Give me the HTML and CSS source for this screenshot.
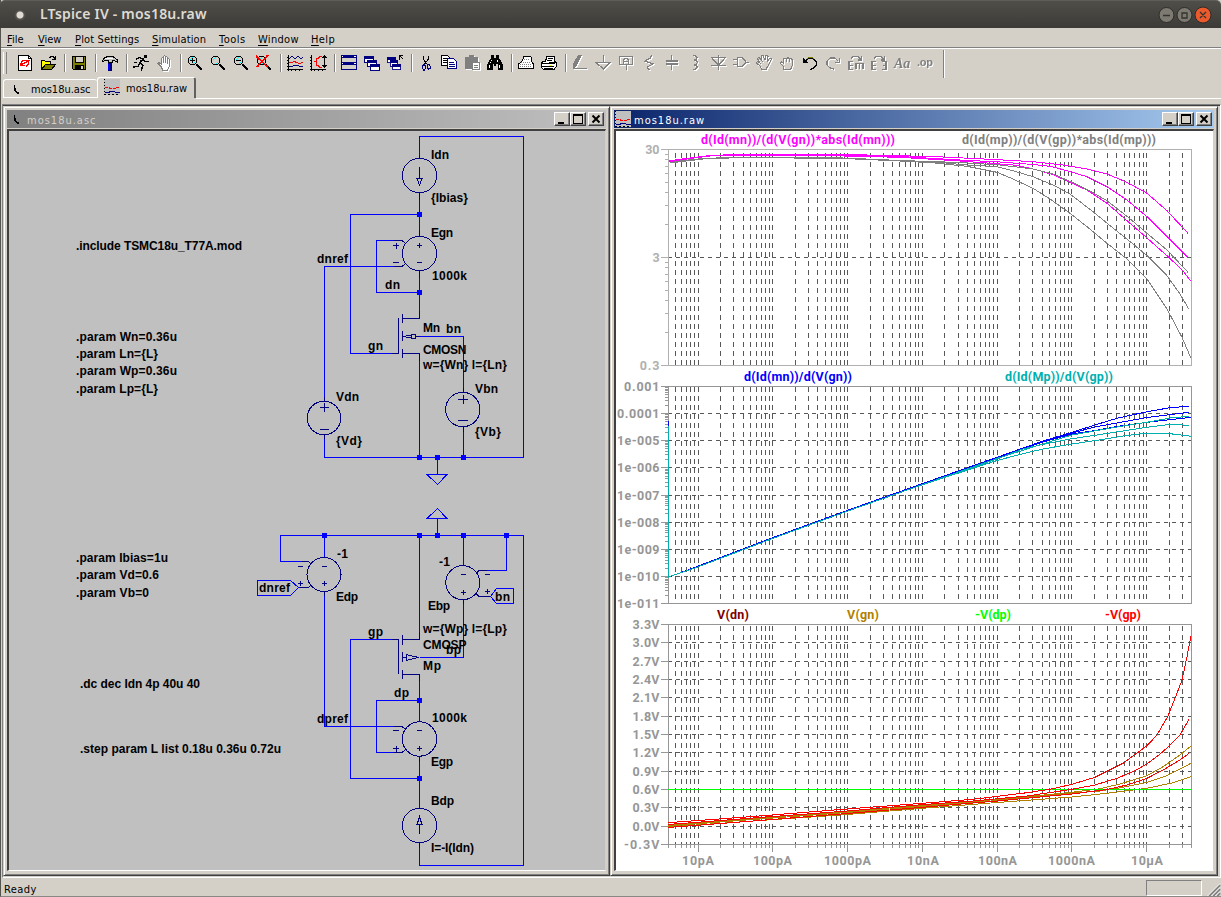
FILE: index.html
```html
<!DOCTYPE html>
<html lang="en">
<head>
<meta charset="utf-8">
<title>LTspice IV - mos18u.raw</title>
<link rel="stylesheet" href="styles.css">
</head>
<body>
<svg class="defs" width="0" height="0">
  <defs>
    <symbol id="i-glass" viewBox="0 0 16 16"><path d="M3.500 1.500h4l2 2v4l-2 2h-4l-2-2v-4z" stroke="#000" fill="none"/><path d="M3 4.500h1M4 3.500h1M5 2.500h1M7 7.500h1M6 8.500h1" stroke="#0ff"/><path d="M9.500 9.500L15 15" stroke="#000" stroke-width="2"/></symbol>
    <symbol id="i-wave" viewBox="0 0 16 16"><path d="M1.500 0v16M0 14.500h16M0 2.500h1M0 5.500h1M0 8.500h1M0 11.500h1M4.500 14v2M8.500 14v2M12.500 14v2" stroke="#000"/><path d="M2 4l3-3 3 3 3-3 3 3 2-2M2 11.500h3l2-1h4l2 1h3" stroke="#000080" fill="none"/><path d="M2 7.500h3l2-1 3 1 2 1 4-1" stroke="#f00" fill="none"/></symbol>
    <symbol id="i-raw" viewBox="0 0 16 16"><path d="M0 0h16v16H0z" fill="#c0c0c0"/><path d="M.5 0v16" stroke="#000" stroke-dasharray="1 2"/><path d="M0 15.500h16" stroke="#000" stroke-dasharray="2 2"/><path d="M1 8.500h4l1 1h5l1-1h4" stroke="#f00" stroke-dasharray="3 1" fill="none"/><path d="M1 13.500h4l1-1h4l2 1h4" stroke="#000080" fill="none"/></symbol>
    <symbol id="i-asc" viewBox="0 0 16 16"><path d="M6.500 4v6M7.500 7v4M8.500 10v2M9.500 11v2M10.500 11v2" stroke="#000"/></symbol>
    <symbol id="i-casc" viewBox="0 0 16 16"><g fill="#fff" stroke="#000080"><path d="M.5 1.500h9v6h-9zM3.500 5.500h9v6h-9zM6.500 9.500h9v6h-9z"/></g><path d="M0 1h10v3H0zM3 5h10v3H3zM6 9h10v3H6z" fill="#000080"/></symbol>
  </defs>
</svg>

<div class="app">
  <header class="titlebar">
    <span class="orb"></span>
    <h1>LTspice IV - mos18u.raw</h1>
    <div class="wm">
      <svg viewBox="0 0 56 20" width="56" height="20"><g stroke="#2d2c29"><circle cx="9.500" cy="10" r="7.500" fill="#7d7a72"/><circle cx="27.500" cy="10" r="7.500" fill="#7d7a72"/><circle cx="46" cy="10" r="8" fill="#ea5a2c"/></g><path d="M6 10.500h7M25 8h5v5h-5zM43 7l6 6M49 7l-6 6" stroke="#35332f" stroke-width="1.300" fill="none"/></svg>
    </div>
  </header>

  <nav class="menubar">
    <span class="m-file"><u>F</u>ile</span><span class="m-view"><u>V</u>iew</span><span class="m-plot"><u>P</u>lot Settings</span><span class="m-sim"><u>S</u>imulation</span><span class="m-tools"><u>T</u>ools</span><span class="m-win"><u>W</u>indow</span><span class="m-help"><u>H</u>elp</span>
  </nav>

  <div class="toolbar">
    <i class="grab"></i>
    <svg class="ic" viewBox="0 0 16 16"><path d="M1.500.5h10l3 3v12h-13z" fill="#fff" stroke="#000"/><path d="M11.500.5v3h3" fill="none" stroke="#000"/><path d="M3.500 11l1-4 2-1.500h2M7 5.500h5l-1 4-2 2M4 10.500h4M4 10l8-4.500" fill="none" stroke="#f00" stroke-width="1.400"/></svg>
    <svg class="ic" viewBox="0 0 16 16"><path d="M1.500 14V5.500h3l1 1h5v3" fill="#ff0" stroke="#000"/><path d="M1.500 14.500l4-5h10l-4 5z" fill="#808000" stroke="#000"/><path d="M9 2.500h1l1-1h2l1 1 1 1.500M15.500 1v4M12 4.500h3" stroke="#000" fill="none"/></svg>
    <i class="sep"></i>
    <svg class="ic" viewBox="0 0 16 16"><path d="M1.500 1.500h13v13h-12l-1-1z" fill="#808000" stroke="#000"/><path d="M4.500 1.500h8v6h-8z" fill="#d4d0c8" stroke="#000"/><path d="M4 10h9v5H4z" fill="#000"/><path d="M10 11h2v3h-2z" fill="#d4d0c8"/></svg>
    <i class="sep"></i>
    <svg class="ic" viewBox="0 0 16 16"><path d="M.5 5.500L3 2.500l3-1h5l2 1.500 2.500 2v2L12 5.500h-2v2H6v-2H3L1 7z" fill="#c0c0c0" stroke="#000"/><path d="M3 3.500h8" stroke="#fff"/><path d="M6 8h4v8H6z" fill="#000080"/><path d="M7 9v6" stroke="#00f" stroke-width="2"/></svg>
    <i class="sep"></i>
    <svg class="ic" viewBox="0 0 16 16"><path d="M11 0h3v3h-3z"/><path d="M3 4.500l3-2 4 1.500-3 4 3 2.500-2 5M10 4l2 2.500h4M7 8.500l-2 3-5 .5" fill="none" stroke="#000" stroke-width="1.400"/><path d="M4 7.500H1M8 5L6 8.500" stroke="#000"/></svg>
    <svg class="ic dis" viewBox="0 0 16 16"><path d="M5.500 12L2 8.500l1-1 2.500 2V3.500l1-1 1 1V8 1.500l1-1 1 1V8 2.500l1-1 1 1V9 4.500l1-1 1 1V11l-2 4h-5z" fill="#fff" stroke="#808080"/></svg>
    <i class="sep"></i>
    <svg class="ic" viewBox="0 0 16 16"><use href="#i-glass"/><path d="M3 5.500h5M5.500 3v5" stroke="#000"/></svg>
    <svg class="ic" viewBox="0 0 16 16"><use href="#i-glass"/></svg>
    <svg class="ic" viewBox="0 0 16 16"><use href="#i-glass"/><path d="M3 5.500h5" stroke="#000"/></svg>
    <svg class="ic" viewBox="0 0 16 16"><use href="#i-glass"/><path d="M0 1l12 11M12 0L1 12M0 2l3 2" stroke="#f00" stroke-width="1.600"/></svg>
    <i class="sep"></i>
    <svg class="ic" viewBox="0 0 16 16"><use href="#i-wave"/></svg>
    <svg class="ic" viewBox="0 0 16 16"><path d="M1.500 0v16M0 14.500h16M0 2.500h1M0 5.500h1M0 8.500h1M0 11.500h1M4.500 14v2M8.500 14v2M12.500 14v2M14.500 1v11M12.500 3l2-2 2 2M12.500 10l2 2 2-2" stroke="#000" fill="none"/><path d="M12 1.500h-2l-2 2H6v7h2l2 2h2M4 6.500h2" stroke="#f00" fill="none"/></svg>
    <i class="sep"></i>
    <svg class="ic" viewBox="0 0 16 16"><path d="M.5.500h15v14H.5zM.5 7.500h15" fill="#d4d0c8" stroke="#000080"/><path d="M0 0h16v3H0zM0 7h16v3H0z" fill="#000080"/><path d="M1 1.500h1M13 1.500h2M1 8.500h1M13 8.500h2" stroke="#fff"/></svg>
    <svg class="ic" viewBox="0 0 16 16"><use href="#i-casc"/></svg>
    <svg class="ic" viewBox="0 0 16 16"><use href="#i-casc" width="14" height="16"/><path d="M12.500 5V.5H16M12.500.5l4 4" stroke="#000" fill="none"/></svg>
    <i class="sep"></i>
    <svg class="ic" viewBox="0 0 16 16"><path d="M5.500 1v3l3 5M10.500 1v3l-4 5" stroke="#000" fill="none"/><path d="M5.500 9.500l2 1v3l-1 1.500h-1l-1-1.500v-2zM9.500 9.500l2 .5 1 2v1.500l-2 .5-1-1z" stroke="#000080" fill="none"/></svg>
    <svg class="ic" viewBox="0 0 16 16"><path d="M.5.500h6l2 2v8h-8z" fill="#fff" stroke="#000"/><path d="M2 3.500h4M2 5.500h4M2 7.500h4" stroke="#000"/><path d="M6.500 3.500h6l3 3v7h-9z" fill="#fff" stroke="#000080"/><path d="M8 7.500h5M8 9.500h6M8 11.500h6" stroke="#000080"/></svg>
    <svg class="ic dis" viewBox="0 0 16 16"><path d="M1 2h4V0h5v2h4v5H8v7H1z" fill="#808080"/><path d="M8.500 7.500h7v7h-7z" fill="#fff" stroke="#808080"/><path d="M10 10.500h4M10 12.500h4" stroke="#808080"/></svg>
    <svg class="ic" viewBox="0 0 16 16"><path d="M4 0h3v3h2V0h3v3l2 3 2 4v5h-5V9H9v2H7V9H6v6H0v-5l2-4 2-3z"/><path d="M4 5.500h1M3 7.500h1M2.500 10v3M10.500 5v2M12.500 10v3" stroke="#fff"/></svg>
    <i class="sep"></i>
    <svg class="ic" viewBox="0 0 16 16"><path d="M3.500 7L6 1.500h6l1.500 1L13 6l2.500 3v4.500h-15V9z" fill="#fff" stroke="#000"/><path d="M6 4.500h6M3 7.500h10M2 9.500h12M2 11.500h12" stroke="#808080" stroke-dasharray="1 1"/></svg>
    <svg class="ic" viewBox="0 0 16 16"><path d="M4.500 6L6 1.500h8l-1 4.500 2 1v5l-2 2.500H2.500l-2-2V8l2-2z" fill="#fff" stroke="#000"/><path d="M7 3.500h5M6 5.500h5M1 8.500h12l2-2M1 11.500h12M3 13.500h9" stroke="#000"/><path d="M8 10.500h3" stroke="#ff0"/></svg>
    <i class="sep"></i>
    <svg class="ic dis" viewBox="0 0 16 16"><path d="M6 0h4L5 10l-3 3H1V9z" fill="#808080"/><path d="M1 13.500h14" stroke="#808080"/></svg>
    <svg class="ic dis" viewBox="0 0 16 16"><path d="M8.500 0v7M1 7.500h14.500L8.500 14z" stroke="#808080" fill="none" stroke-width="1.300"/></svg>
    <svg class="ic dis" viewBox="0 0 16 16"><path d="M1.500 1.500h13v8h-13zM8.500 10v5M5.500 8.500V5l1-1.500h3l1 1.500v3.500M6 6.500h4" stroke="#808080" fill="none" stroke-width="1.200"/></svg>
    <svg class="ic dis" viewBox="0 0 16 16"><path d="M10.500 0l-1 3L4 6l8 3-6 3 2.500 3" stroke="#808080" fill="none" stroke-width="1.300"/></svg>
    <svg class="ic dis" viewBox="0 0 16 16"><path d="M7.500 0v5M7.500 9v6" stroke="#808080"/><path d="M2 6h12M2 9h12" stroke="#808080" stroke-width="2"/></svg>
    <svg class="ic dis" viewBox="0 0 16 16"><path d="M6 .5h2l2 2-1 2.500H7h2l1.500 2-1.500 3H7h2l1.500 2L8 14.500H6" stroke="#808080" fill="none" stroke-width="1.300"/></svg>
    <svg class="ic dis" viewBox="0 0 16 16"><path d="M8.500 0v15M1 2.500h15M2 3l6.500 7L15 3M1 10.500h15" stroke="#808080" fill="none" stroke-width="1.300"/></svg>
    <svg class="ic dis" viewBox="0 0 16 16"><path d="M4.500 2.500h4l4 3v3l-4 3h-4zM0 4.500h4M0 9.500h4M13 7.500h3" stroke="#808080" fill="none" stroke-width="1.500"/></svg>
    <svg class="ic dis" viewBox="0 0 16 16"><path d="M6 14.500L4 11 .5 8l1-1.500L4 8 1.500 3.500 3 2.500 6 6 5 1l2-.5L9 5l1-4.500 2 .5-.5 5L14 3l1.500 1-3 6-2.500 4.500z" stroke="#808080" fill="none" stroke-width="1.100"/></svg>
    <svg class="ic dis" viewBox="0 0 16 16"><path d="M5 14.500L4 11 1.500 8.500 2.500 7l2 1V4L6 3l1.500 1L9 2.500 10.500 4 12 3.500 13.500 5v5l-2 4.500zM7.500 4v3M10.500 4v3" stroke="#808080" fill="none" stroke-width="1.100"/></svg>
    <svg class="ic" viewBox="0 0 16 16"><path d="M3 6.500l3-3h5l3 3v4l-3 3-3 1" fill="none" stroke="#000"/><path d="M5 3.500l2-1h3l2 1" fill="none" stroke="#808000"/><path d="M1 3v5h5z"/></svg>
    <svg class="ic dis" viewBox="0 0 16 16"><path d="M13 6l-3-3H5L2 6v4l3 3 4 1M14.500 3v4.500H10" fill="none" stroke="#808080" stroke-width="1.300"/></svg>
    <svg class="ic dis" viewBox="0 0 16 16"><path d="M5 6.500H1v8h4M1 10.500h4M8 14V8.500h7V14M11.500 9v5M3 3.500l2-2h5l3 3M13.500 1v4H10" fill="none" stroke="#808080" stroke-width="1.300"/></svg>
    <svg class="ic dis" viewBox="0 0 16 16"><path d="M5 6.500H1v8h4M1 10.500h4M11 6.500h4v8h-4M12 10.500h3M3 3.500l2-2h5l3 3M13.500 1v4H10" fill="none" stroke="#808080" stroke-width="1.300"/></svg>
    <span class="ic dis aa">Aa</span>
    <span class="ic dis op">.op</span>
    <i class="endbar"></i>
  </div>

  <div class="tabs">
    <div class="tab"><svg class="ti" viewBox="0 0 16 16"><use href="#i-asc"/></svg><span>mos18u.asc</span></div>
    <div class="tab on"><svg class="ti" viewBox="0 0 16 16"><use href="#i-raw"/></svg><span>mos18u.raw</span></div>
    <div class="rest"></div>
  </div>

  <main class="mdi">
    <section class="win">
      <div class="cap off"><svg class="ti" viewBox="0 0 16 16"><use href="#i-asc"/></svg><span>mos18u.asc</span>
        <div class="btns"><svg viewBox="0 0 14 12"><path d="M3 9h6v2H3z"/></svg><svg viewBox="0 0 14 12"><path d="M2 1h10v10H2zM3 3v7h8V3z" fill-rule="evenodd"/></svg><svg class="x" viewBox="0 0 14 12"><path d="M3.500 2.500l7 7M10.500 2.500l-7 7" stroke="#000" stroke-width="2"/></svg></div></div>
      <div class="view gray">
        <svg class="sheet" viewBox="9 131 595 739" width="595" height="739">
          <g class="wire">
            <path d="M419.500 158V136.500H523.500V457.500H324.500V434M419.500 193V236M419.500 214.500H350.500V353.500H392M402 240.500H376.500V292.500H419.500M419.500 271V312M402 266.500H324.500V401M420 336.500H463.500V392M463.500 427V457M419.500 360V457M437.500 457V474.500M427 474.500H447L437.500 484.500Z"/>
            <path d="M437.500 535V518.500M427 518.500H447L437.500 508.500ZM302 561.500H280.500V535.500H523.500V865.500H419.500V843M324.500 535V557M419.500 535V633M463.500 535V566M506.500 535V570.500H487M463.500 600V657.500H420M324.500 592V726.500H402M392 639.500H350.500V778.500H419.500M402 752.500H376.500V700.500H419.500M419.500 680V722M419.500 757V808M257.500 580.500H290.500L298.500 587.500L290.500 595.500H257.500ZM513.500 588.500H496.500L490.500 596.500L496.500 603.500H513.500Z"/>
          </g>
          <g class="sym">
            <circle cx="419.500" cy="175.500" r="17.200"/><circle cx="419.500" cy="253.500" r="17.200"/><circle cx="324" cy="418" r="16.800"/><circle cx="462.800" cy="409.500" r="17.200"/><circle cx="324" cy="574.500" r="17"/><circle cx="462.800" cy="582.700" r="17"/><circle cx="419.500" cy="739" r="17.200"/><circle cx="419.500" cy="825.500" r="17.200"/>
            <path d="M419.500 167V178M417 178.500H422L419.500 185ZM419.500 834V824M417 824.500H422L419.500 817Z"/>
            <path d="M393 240.500H402L406 243.500M393 266.500H402L406 263.500M393 726.500H402L406 729.500M393 752.500H402L406 749.500M302 561.500H308L311 563.500M299 587.500H308L311 585.500M487 570.500H479L476 573.500M490 596.500H479L476 593.500"/>
            <path d="M419.500 155V158M419.500 193V200M419.500 230V236M419.500 271V278M324.500 397V401M324.500 434V439M463.500 388V392M463.500 427V432M324.500 592V596M463.500 600V604M419.500 757V762M419.500 843V848"/>
            <path d="M393 245.500H399M396 242.500V249M393 262.500H399M417 245.500H422M419.500 243V248M417 262.500H422M393 730.500H399M393 748.500H399M396 745.500V752M417 730.500H422M417 748.500H422M419.500 746V751M320 407.500H329M324.500 403V412M320 429.500H329M458 399.500H468M463.500 395V404M458 420.500H468M298 566.500H303M298 583.500H303M300.500 581V586M322 566.500H327M322 583.500H327M324.500 581V586M461 574.500H466M461 592.500H466M463.500 590V595M485 574.500H490M485 591.500H490M487.500 589V594"/>
            <path d="M392 353.500H398.500V318M402.500 314V323M402.500 331V341M402.500 349V358M402 318.500H419.500V311M402 353.500H419.500V361M402 336.500H406M406 335.500H411M406 337.500H411M411 334.500H415V338.500H411M411.500 334V339M415 336.500H420"/>
            <path d="M392 639.500H398.500V674M402.500 635V645M402.500 652V662M402.500 670V679M402 639.500H419.500V632M402 674.500H419.500V681M402 657.500H406M406.500 655V660M406 654.500L418.500 657.500L406 660.500"/>
          </g>
          <g class="node">
            <path d="M417 212h5v5h-5zM417 290h5v5h-5zM417 455h5v5h-5zM435 455h5v5h-5zM461 455h5v5h-5zM322 533h5v5h-5zM417 533h5v5h-5zM435 533h5v5h-5zM461 533h5v5h-5zM504 533h5v5h-5zM417 698h5v5h-5zM417 776h5v5h-5z"/>
          </g>
          <g class="lbl">
            <text x="431" y="159" textLength="18">Idn</text><text x="431" y="202" textLength="37">{Ibias}</text><text x="431" y="237" textLength="22">Egn</text><text x="432" y="280" textLength="35">1000k</text><text x="317" y="263" textLength="31">dnref</text><text x="385" y="289" textLength="15">dn</text><text x="368" y="350" textLength="15">gn</text><text x="423" y="332" textLength="17">Mn</text><text x="446" y="333" textLength="15">bn</text><text x="423" y="354" textLength="43.500">CMOSN</text><text x="423" y="369" textLength="84">w={Wn} l={Ln}</text><text x="336" y="401" textLength="23">Vdn</text><text x="336" y="445" textLength="26">{Vd}</text><text x="475" y="393" textLength="23">Vbn</text><text x="475" y="436" textLength="26">{Vb}</text>
            <text x="337" y="558" textLength="11">-1</text><text x="336" y="601" textLength="22">Edp</text><text x="259" y="592" textLength="31">dnref</text><text x="439" y="566" textLength="11">-1</text><text x="428" y="610" textLength="22">Ebp</text><text x="495" y="601" textLength="15">bn</text><text x="423" y="633" textLength="84">w={Wp} l={Lp}</text><text x="423" y="649" textLength="43.500">CMOSP</text><text x="446" y="654" textLength="15">bp</text><text x="423" y="670" textLength="18">Mp</text><text x="368" y="636" textLength="15">gp</text><text x="394" y="697" textLength="15">dp</text><text x="317" y="723" textLength="31">dpref</text><text x="432" y="722" textLength="35">1000k</text><text x="431" y="766" textLength="22">Egp</text><text x="431" y="805" textLength="23">Bdp</text><text x="431" y="852" textLength="43">I=-I(Idn)</text>
            <text x="76" y="250" textLength="166">.include TSMC18u_T77A.mod</text><text x="76" y="341" textLength="101">.param Wn=0.36u</text><text x="76" y="358" textLength="82">.param Ln={L}</text><text x="76" y="375" textLength="101">.param Wp=0.36u</text><text x="76" y="393" textLength="82">.param Lp={L}</text><text x="76" y="562" textLength="92">.param Ibias=1u</text><text x="76" y="579" textLength="83">.param Vd=0.6</text><text x="76" y="597" textLength="73">.param Vb=0</text><text x="80" y="688" textLength="120">.dc dec Idn 4p 40u 40</text><text x="80" y="753" textLength="201">.step param L list 0.18u 0.36u 0.72u</text>
          </g>
        </svg>
      </div>
    </section>
    <section class="win">
      <div class="cap act"><svg class="ti" viewBox="0 0 16 16"><use href="#i-raw"/></svg><span>mos18u.raw</span>
        <div class="btns"><svg viewBox="0 0 14 12"><path d="M3 9h6v2H3z"/></svg><svg viewBox="0 0 14 12"><path d="M2 1h10v10H2zM3 3v7h8V3z" fill-rule="evenodd"/></svg><svg class="x" viewBox="0 0 14 12"><path d="M3.500 2.500l7 7M10.500 2.500l-7 7" stroke="#000" stroke-width="2"/></svg></div></div>
      <div class="view"><svg class="sheet" id="plots" viewBox="616 131 596 739" width="596" height="739"></svg></div>
    </section>
  </main>

  <footer class="status"><span>Ready</span><div class="pane"></div><svg width="16" height="16" viewBox="0 0 16 16"><path d="M4 15L15 4M8 15l7-7M12 15l3-3" stroke="#808080" stroke-width="2"/><path d="M2.500 15L15 2.500M6.500 15L15 6.500M10.500 15l4.500-4.500" stroke="#fff"/></svg></footer>
</div>
<script src="plots.js"></script>
</body>
</html>
```
FILE: plots.js
```js
// Waveform panes: axes, dashed grids, traces and labels.
const NS = 'http://www.w3.org/2000/svg';
const root = document.getElementById('plots');
const X0 = 668, X1 = 1191, DEC = (X1 - X0) / 7;
const xOf = pA => X0 + Math.log10(pA / 4) * DEC;

function add(tag, attrs, text) {
  const el = document.createElementNS(NS, tag);
  for (const k in attrs) el.setAttribute(k, attrs[k]);
  if (text !== undefined) el.textContent = text;
  root.appendChild(el);
  return el;
}
const px = v => Math.round(v) + 0.5;

function verticals(top, bottom, offset) {
  let d = '';
  for (let e = 0; e < 8; e++)
    for (let k = 1; k < 10; k++) {
      const v = k * 10 ** e;
      if (v > 4.5 && v < 3.9e7) d += `M${px(xOf(v))} ${top + offset}V${bottom}`;
    }
  add('path', { class: 'grid v', d });
}
function pane(top, bottom, cls, rows, minors, offset) {
  verticals(top, bottom, offset);
  let grid = '', ticks = '';
  rows.forEach(([label, y], i) => {
    if (i > 0 && i < rows.length - 1) grid += `M${X0} ${y + 0.5}H${X1}`;
    ticks += `M661 ${y + 0.5}H${X0}`;
    const w = label.length * 7.1 - (label.length === 4 || label.length === 3 ? 1.5 : 0);
    add('text', { class: 'num ' + cls, x: 659.5 - w, y: y + 5, textLength: w }, label);
  });
  minors.forEach(y => { ticks += `M665 ${px(y)}H${X0}`; });
  add('path', { class: 'grid h', d: grid });
  add('path', { class: 'axis ' + cls, d: ticks + `M${X0 + 0.5} ${top + 0.5}H${X1 + 0.5}V${bottom + 0.5}H${X0 + 0.5}Z` });
}
function trace(color, ...lines) {
  lines.forEach(p => add('polyline', { class: 'trace', stroke: color, points: p }));
}
function title(x, w, y, color, text) {
  add('text', { class: 'num', x, y, textLength: w, fill: color }, text);
}

// gm/Id
let minors = [];
for (const base of [149, 257]) for (let k = 2; k < 10; k++) minors.push(base + 108 * (1 - Math.log10(k)));
pane(149, 365, 'light', [['30', 149], ['3', 257], ['0.3', 365]], minors, 4);
trace('#ff00ff',
  '669,161 678,159.500 690,158 710,155.500 737,154.500 843,154.500 900,155.700 943,157 990,159.300 1033,161.700 1063,165 1087,169 1107,174 1127,182.300 1147,193.300 1167,210.700 1188,233.300',
  '669,162 690,158.500 710,156 750,155.200 843,155.300 900,156.500 960,160 1000,162 1033,164.500 1050,166.300 1067,170.700 1087,176.700 1107,186.700 1127,200 1147,216.700 1167,236.700 1188,257.300',
  '669,161 690,158 710,156 800,155 900,157.300 960,161 1017,165.300 1040,170.700 1053,174.700 1070,182.300 1087,190 1107,203.300 1127,220.700 1147,238 1167,255.700 1182,269.700 1191,281.300');
trace('#808080',
  '670,162.700 683,160.500 703,158.500 743,157 780,157 843,158 900,160.500 960,162.500 1000,165 1033,169 1053,174 1073,182.700 1087,189.300 1107,200.700 1127,216.300 1147,233.300 1167,250 1188,272.300',
  '670,163 703,159 743,157.500 843,158.500 900,161 940,162.500 967,165 997,166.700 1013,170.700 1033,176.700 1053,185 1070,194 1093,211.700 1113,228 1133,244 1147,255.700 1167,275.700 1180,294 1188.700,309',
  '670,163 703,159 743,157.500 843,158.500 900,161 935,163 967,166.300 997,172.300 1013,179 1033,188.300 1050,199 1070,213.300 1087,226.700 1107,243.300 1127,259 1147,279 1167,309 1182,337.300 1191,358.300');
title(701, 194, 144, '#ff00ff', 'd(Id(mn))/(d(V(gn))*abs(Id(mn)))');
title(962, 194, 144, '#808080', 'd(Id(mp))/(d(V(gp))*abs(Id(mp)))');

// gm
const gmRows = ['0.001', '0.0001', '1e-005', '1e-006', '1e-007', '1e-008', '1e-009', '1e-010', '1e-011']
  .map((t, i) => [t, Math.round(386 + i * 27.125)]);
minors = [];
for (let i = 0; i < 8; i++) for (let k = 2; k < 10; k++) minors.push(386 + 27.125 * (i + 1 - Math.log10(k)));
pane(386, 603, 'dark', gmRows, minors, 1);
const ramp = '669,577 697,566.500 771.700,538 847,510.500 920,484.500 ';
trace('#0000ff',
  ramp + '997,457.300 1043,441 1072,432.300 1095,425 1117,418.300 1147,411.700 1170,407.700 1189,406.300',
  ramp + '997,457.300 1043,441.500 1072,433 1095,427 1117,423 1147,417.500 1170,414.700 1189,412.300',
  ramp + '997,457.800 1043,442 1072,434 1095,430.500 1117,426.500 1147,422.300 1170,419.700 1191,417.300',
  '668.500,421 668.500,427');
const ramp2 = '668.500,426 668.500,577 697,567.300 771.700,538.800 847,511.300 920,485.500 ';
trace('#00b0b0',
  ramp2 + '997,458.500 1050,441.700 1072,435 1117,427 1147,422.300 1170,418 1189,416.300',
  ramp2 + '997,459 1023,449 1043,444.300 1072,438.700 1097,435 1123,431 1147,427.300 1170,424.300 1189,425.300',
  ramp2 + '997,460.500 1023,453.700 1043,449 1072,444 1097,440.300 1123,436 1147,433 1170,433.700 1191,436.300');
title(744, 108, 381, '#0000ff', 'd(Id(mn))/d(V(gn))');
title(1005, 108, 381, '#00b0b0', 'd(Id(Mp))/d(V(gp))');

// Node voltages
const vRows = [];
for (let i = 0; i <= 12; i++) vRows.push([(3.3 - i * 0.3).toFixed(1).replace('-0.0', '0.0') + 'V', Math.round(624 + i * 18.333)]);
pane(624, 844, 'dark', vRows, [], 2);
let foot = '';
for (let e = 0; e < 8; e++) for (let k = 1; k < 10; k++) {
  const v = k * 10 ** e;
  if (v >= 4 && v <= 4e7) foot += `M${px(xOf(v))} 844V${k === 1 ? 852 : 848}`;
}
add('path', { class: 'axis dark', d: foot });
trace('#b08000',
  '668,825 753,818.500 847,811.500 920,805.500 997,799.500 1072,792.300 1100,788.700 1120,784 1147,775.700 1163,766.700 1180,755 1191,746',
  '668,826 753,819.500 847,812.500 920,806.500 997,800.500 1072,793 1100,791 1123,787.300 1147,782.300 1167,775.700 1191,763.300',
  '668,827 753,821 847,814.500 920,808.500 997,802.500 1072,797 1107,793.300 1147,788.300 1173,782.700 1191,776.700');
trace('#00ff00', '668,789.500 1191,789.500');
trace('#ff0000',
  '668,822.700 753,816.500 847,809 920,803.500 973,799.300 1027,792.700 1050,789.300 1072,784.300 1095,777.300 1123,763.300 1147,745.700 1157,735 1168,716 1175,698.300 1182,680 1187,656.700 1191,635.700',
  '668,824.500 753,818 847,811 920,804.800 973,801 1027,796 1072,789.300 1095,785 1117,778.300 1133,771.700 1147,764 1163,751.700 1180,735 1189,719.300',
  '668,827.500 753,821 847,813.500 920,807.500 997,801 1072,794 1107,789.500 1127,785 1147,778.300 1163,770 1180,760 1189,753.300');
title(717, 32, 619, '#800000', 'V(dn)');
title(847, 32, 619, '#b08000', 'V(gn)');
title(975, 36, 619, '#00ff00', '-V(dp)');
title(1105, 36, 619, '#ff0000', '-V(gp)');
[['10pA', 682, 32], ['100pA', 753, 39], ['1000pA', 824, 47], ['10nA', 907, 32], ['100nA', 978, 39], ['1000nA', 1048, 47], ['10µA', 1131, 32]]
  .forEach(([t, x, w]) => add('text', { class: 'num dark', x, y: 865, textLength: w }, t));
```
FILE: styles.css
```css
* { box-sizing: border-box; }
body { margin: 0; background: #d4d0c8; font-family: "DejaVu Sans Condensed", "DejaVu Sans", sans-serif; font-size: 11px; color: #000; }
.defs { position: absolute; }
.app { width: 1221px; height: 897px; display: flex; flex-direction: column; background: #d4d0c8; border-left: 1px solid #55534e; border-bottom: 1px solid #8a8884; }

.titlebar { height: 28px; margin-left: -1px; flex: none; display: flex; align-items: center; padding-left: 14px; background: linear-gradient(#504e49, #3c3b37); border-top: 1px solid #5f5d57; border-radius: 5px 5px 0 0; }
.orb { width: 12px; height: 12px; border-radius: 50%; background: radial-gradient(circle, #dfdbd2 0 3px, #5a5852 4px, #45443f 6px); }
.titlebar h1 { margin: -2px 0 0 14px; font: 600 14px/20px "Noto Sans", sans-serif; color: #dfdbd2; letter-spacing: .2px; }
.wm { margin-left: auto; height: 20px; width: 64px; }
.wm svg { display: block; }

.menubar { height: 20px; flex: none; display: flex; border-bottom: 1px solid #808080; line-height: 23px; padding-left: 6px; white-space: nowrap; }
.menubar u { text-underline-offset: 2px; }
.m-file { width: 31px; }
.m-view { width: 37px; }
.m-plot { width: 77px; letter-spacing: .15px; }
.m-sim { width: 67px; letter-spacing: .15px; }
.m-tools { width: 39px; letter-spacing: .5px; }
.m-win { width: 53px; letter-spacing: .3px; }
.m-help { letter-spacing: .4px; }

.toolbar { height: 30px; flex: none; display: flex; align-items: flex-start; border-top: 1px solid #fff; padding: 6px 0 0 2px; }
.grab { width: 4px; height: 22px; margin: -3px 10px 0 0; border-right: 1px solid #808080; border-left: 1px solid #fff; }
.sep { width: 2px; height: 18px; margin: -1px 5px 0 1px; border-left: 1px solid #808080; border-right: 1px solid #fff; }
.ic { width: 16px; height: 16px; margin-right: 7px; flex: none; overflow: visible; shape-rendering: crispEdges; }
.dis { filter: drop-shadow(1px 1px 0 #fff); color: #808080; }
.aa { font: italic bold 14px/17px "Liberation Serif", serif; }
.op { font: bold 11px/14px "Liberation Sans", sans-serif; letter-spacing: -.3px; }
.endbar { width: 2px; height: 28px; margin: -5px 0 0 3px; border-left: 1px solid #808080; border-right: 1px solid #fff; }

.tabs { height: 26px; flex: none; display: flex; align-items: flex-start; padding-left: 2px; }
.tab { height: 19px; margin-top: 1px; width: 94px; display: flex; align-items: center; border: 1px solid #fff; border-right: 0; border-radius: 3px 3px 0 0; }
.tab span { margin-top: 2px; }
.tab .ti { margin-right: 7px; margin-left: 4px; }
.tab.on { margin-top: -1px; width: 99px; height: 21px; border-right: 2px solid #606060; border-bottom: 0; }
.tab.on .ti { margin: -3px 6px 0 6px; }
.tab.on span { margin-top: 1px; }
.rest { flex: 1; height: 21px; border-bottom: 1px solid #fff; }
.ti { width: 16px; height: 16px; flex: none; shape-rendering: crispEdges; }

.mdi { height: 774px; flex: none; margin: 0 0 0 1px; display: flex; border: 1px solid #808080; border-right-color: #fff; border-bottom-color: #fff; box-shadow: inset 0 1px #404040; padding: 1px 0 2px 0; }
.win { display: flex; flex-direction: column; flex: none; width: 607px; height: 770px; border: 1px solid #d4d0c8; border-right-color: #404040; border-bottom-color: #404040; box-shadow: inset 1px 1px #fff, inset -1px -1px #808080; background: #d4d0c8; padding: 3px; }
.win + .win { width: 608px; }
.cap { height: 18px; margin-bottom: 1px; display: flex; align-items: center; letter-spacing: 1px; flex: none; }
.cap span { padding-top: 2px; }
.off { background: linear-gradient(90deg, #808080, #c0c0c0); color: #d4d0c8; }
.off .ti { margin: 0 3px 0 1px; }
.act { background: linear-gradient(90deg, #0a246a, #a6caf0); color: #fff; }
.act .ti { margin: 0 3px 0 1px; }
.btns { margin-left: auto; display: flex; padding-right: 2px; }
.btns svg { width: 16px; height: 14px; background: #d4d0c8; border: 1px solid; border-color: #fff #404040 #404040 #fff; box-shadow: inset -1px -1px #808080; shape-rendering: crispEdges; }
.btns .x { margin-left: 2px; shape-rendering: auto; }
.view { border: 2px solid #404040; border-right: 1px solid #d4d0c8; border-bottom: 1px solid #fff; background: #fff; overflow: hidden; }
.view.gray { background: #c0c0c0; }
.sheet { display: block; }

.wire { fill: none; stroke: #00f; shape-rendering: crispEdges; }
.sym { fill: none; stroke: #000080; shape-rendering: crispEdges; }
.node { fill: #00f; shape-rendering: crispEdges; }
.lbl { font: bold 12px "Liberation Sans", Arial, sans-serif; fill: #000; }

.grid { stroke: #585858; fill: none; shape-rendering: crispEdges; }
.grid.v { stroke-dasharray: 5 4; }
.grid.h { stroke-dasharray: 4 4; }
.axis { fill: none; shape-rendering: crispEdges; }
.axis.light { stroke: #b0b0b0; }
.axis.dark { stroke: #969696; }
.trace { fill: none; shape-rendering: crispEdges; stroke-width: 1; }
.num { font: 700 12.5px Roboto, "Liberation Sans", sans-serif; }
.num.light { fill: #b0b0b0; }
.num.dark { fill: #969696; }

.status { flex: 1; display: flex; align-items: center; padding-left: 3px; }
.status span { flex: 1; padding-top: 3px; letter-spacing: .4px; }
.pane { width: 56px; height: 16px; margin: 1px 3px 0 0; border: 1px solid; border-color: #808080 #fff #fff #808080; }
.status svg { margin-top: 3px; }
```
